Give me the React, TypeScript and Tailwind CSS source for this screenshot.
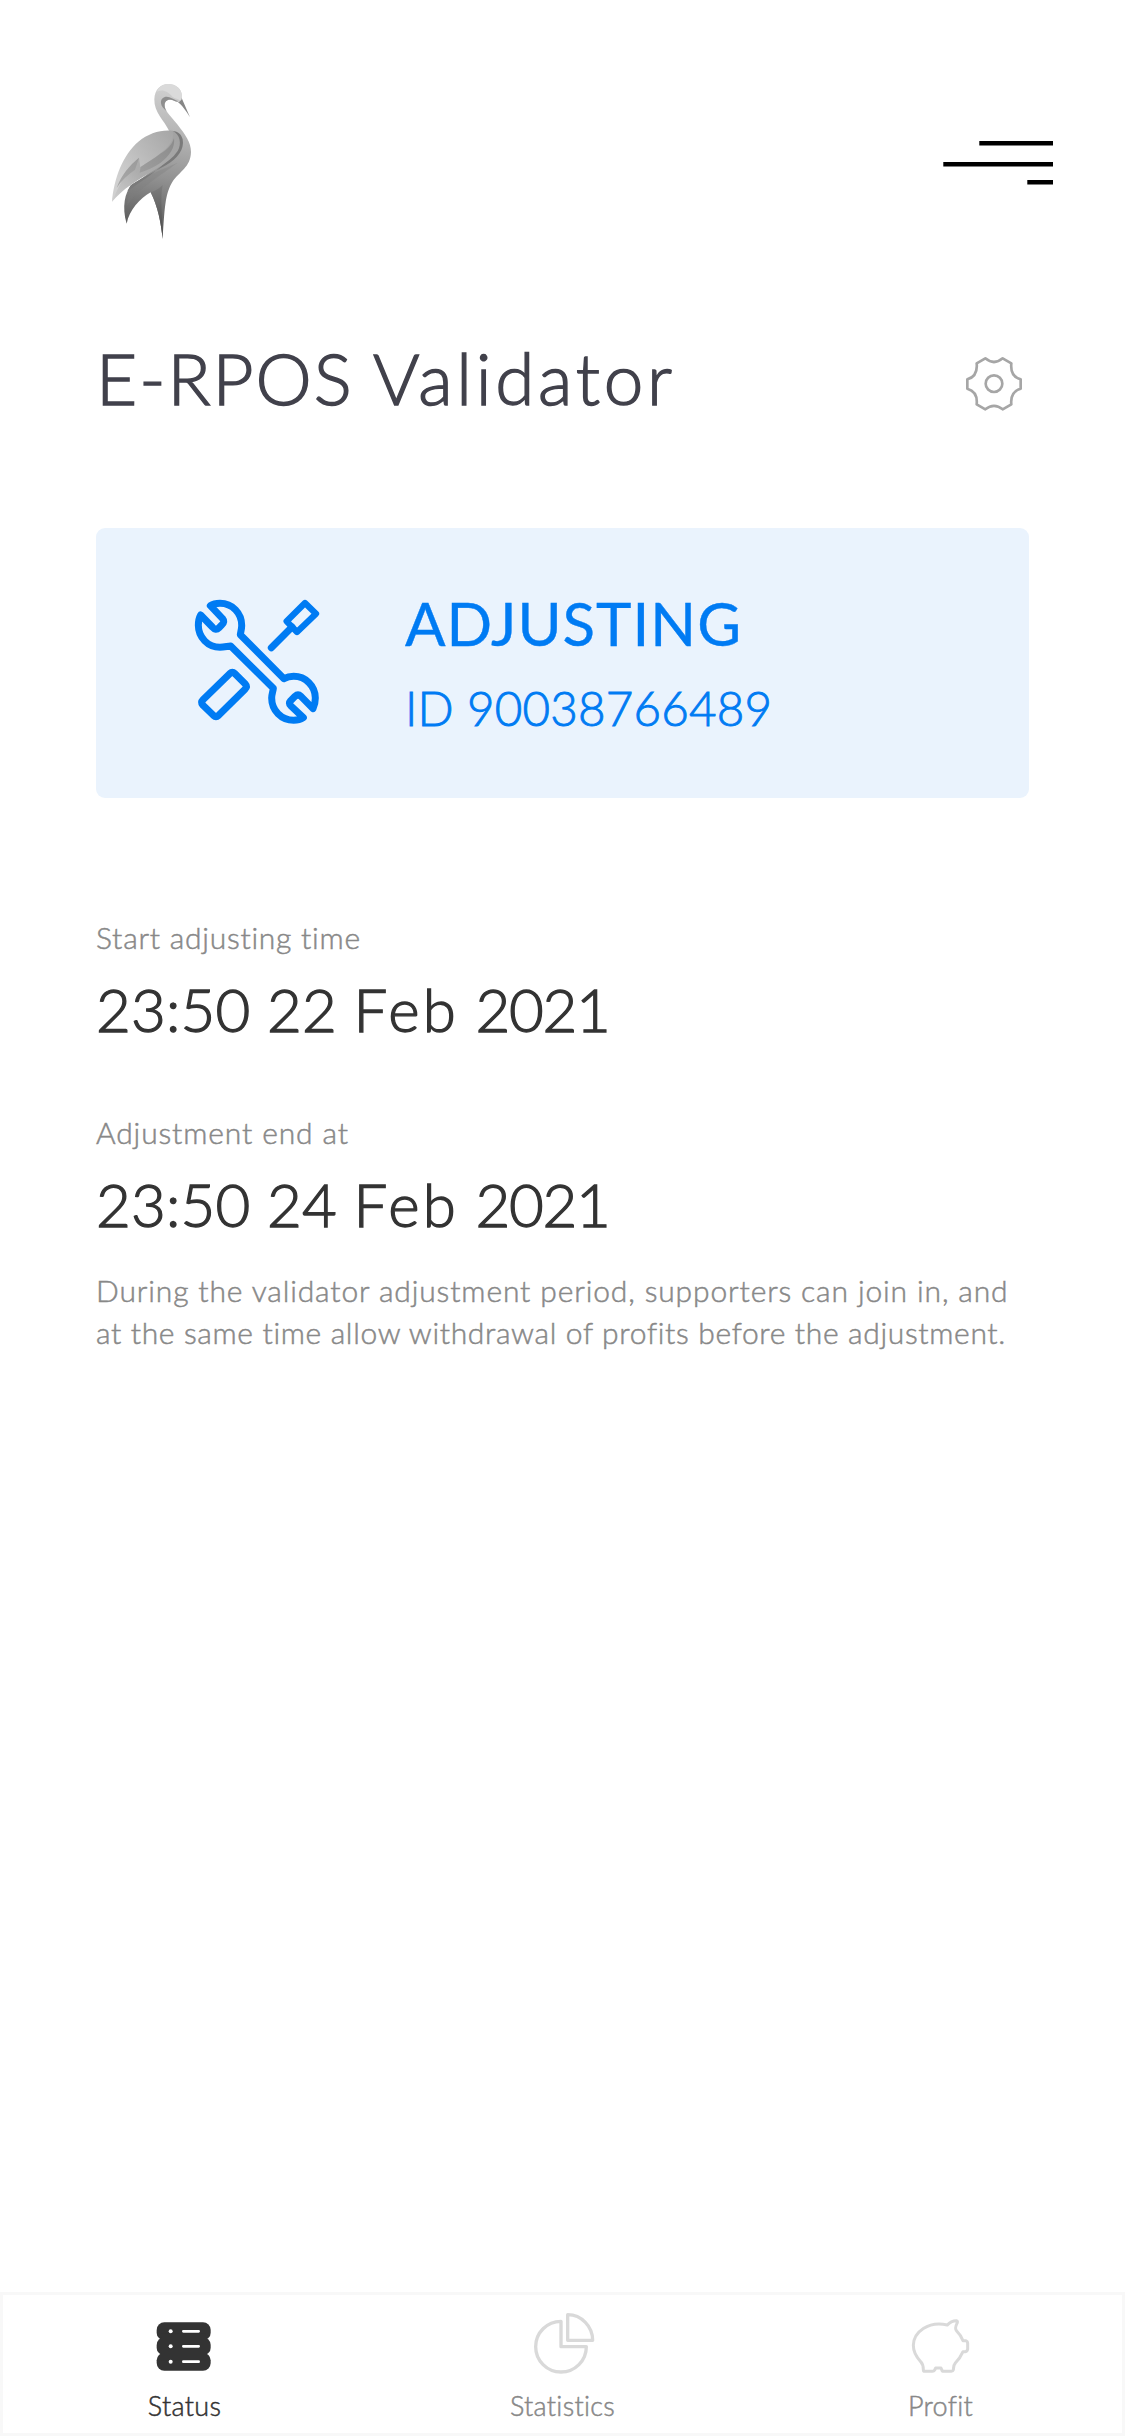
import type { ReactNode } from "react";

function CraneLogo() {
  return (
    <svg className="h-[180px] w-[130px]" viewBox="0 0 390 540" aria-label="Crane logo">
      <defs>
        <linearGradient id="body" gradientUnits="userSpaceOnUse" x1="240" y1="42" x2="170" y2="470">
          <stop offset="0" stopColor="#d2d2d2" />
          <stop offset="0.35" stopColor="#b4b4b4" />
          <stop offset="0.65" stopColor="#929292" />
          <stop offset="1" stopColor="#5c5c5c" />
        </linearGradient>
        <linearGradient id="wing" gradientUnits="userSpaceOnUse" x1="90" y1="330" x2="260" y2="200">
          <stop offset="0" stopColor="#d0d0d0" />
          <stop offset="0.5" stopColor="#bababa" />
          <stop offset="1" stopColor="#a6a6a6" />
        </linearGradient>
        <linearGradient id="lower" gradientUnits="userSpaceOnUse" x1="270" y1="200" x2="70" y2="390">
          <stop offset="0" stopColor="#a2a2a2" />
          <stop offset="0.6" stopColor="#adadad" />
          <stop offset="1" stopColor="#cdcdcd" />
        </linearGradient>
        <linearGradient id="fold" gradientUnits="userSpaceOnUse" x1="260" y1="200" x2="90" y2="360">
          <stop offset="0" stopColor="#8a8a8a" />
          <stop offset="1" stopColor="#a8a8a8" />
        </linearGradient>
        <linearGradient id="leg" gradientUnits="userSpaceOnUse" x1="205" y1="350" x2="218" y2="500">
          <stop offset="0" stopColor="#7c7c7c" />
          <stop offset="1" stopColor="#484848" />
        </linearGradient>
      </defs>
      <path
        fill="url(#body)"
        d="M238 184C222 150 192 128 193 88C194 58 212 42 235 42C257 42 277 56 276 82L271 94C262 97 256 93 248 90C234 85 223 92 224 107C226 126 247 143 263 164C286 194 303 216 303 246C302 292 268 304 247 336C228 368 224 400 218 507C213 460 204 410 182 367C150 385 118 420 110 461C95 410 105 368 124 345C160 322 215 300 238 184Z"
      />
      <path fill="#dadada" d="M201 65C207 48 221 42 235 42C257 42 277 57 276 80L271 92C266 86 254 86 247 80C237 65 215 56 201 65Z" />
      <path fill="#8e8e8e" d="M213 100C211 84 226 77 238 82C248 85 256 92 266 94C258 97 253 92 246 90C234 86 223 93 224 107C224 113 226 118 230 124C221 116 214 110 213 100Z" />
      <path fill="#868686" d="M264 97C271 94 275 90 275 84L300 142C289 124 277 106 264 97Z" />
      <path fill="#7a7a7a" d="M244 183C261 182 274 191 278 208C284 239 262 266 229 285C194 305 157 322 122 346L112 364C158 330 210 300 240 260Z" />
      <path fill="url(#lower)" d="M66 395C83 320 150 230 248 182C270 193 276 221 263 243C235 285 178 304 122 345C100 360 82 377 66 395Z" />
      <path fill="url(#wing)" d="M66 395C72 325 98 255 145 215C176 189 213 178 248 182C256 204 237 231 213 248C194 265 171 277 151 292L147 263C121 286 96 324 66 395Z" />
      <path fill="url(#fold)" d="M147 263L135 299C113 314 94 332 80 354C94 314 119 286 147 263Z" />
      <path fill="url(#fold)" d="M252 204C246 226 230 239 213 250C193 266 171 278 152 291L149 308C171 300 194 291 212 278C239 257 256 233 252 204Z" />
      <path fill="#7e7e7e" opacity=".35" d="M124 346C118 366 112 386 112 408C137 360 207 320 263 278C225 295 162 319 124 346Z" />
      <path fill="url(#leg)" d="M182 367C197 363 209 354 218 345C210 385 217 430 218 507C213 460 204 410 182 367Z" />
    </svg>
  );
}

function MenuIcon() {
  return (
    <svg className="h-[45px] w-[110px]" viewBox="0 0 110 45" aria-label="Menu">
      <rect x="36.3" y="0" width="73.7" height="4.5" />
      <rect x="0.3" y="21" width="109.7" height="4.5" />
      <rect x="84.3" y="39" width="25.7" height="4.5" />
    </svg>
  );
}

function GearIcon() {
  return (
    <svg className="h-[90px] w-[110px]" viewBox="0 0 330 270" fill="none" stroke="#a6a6a6" strokeWidth="8" strokeLinejoin="round" aria-label="Settings">
      <path d="M136 55Q162 77 188 55L214 70Q210 109 242 118V146Q210 155 214 193L188 208Q162 187 136 208L110 193Q114 155 82 146V118Q114 109 110 70Z" />
      <circle cx="162" cy="131" r="25" />
    </svg>
  );
}

function ToolsIcon() {
  return (
    <svg className="h-[160px] w-[170px]" viewBox="0 0 510 480" fill="none" stroke="#007bf3" strokeWidth="21" strokeLinecap="round" strokeLinejoin="round">
      <path d="M121 77C130 71 140 70 150 70C187 70 216 100 215 138C215 147 212 156 211 164L342 296C351 291 361 289 371 289C407 289 436 318 436 354C436 366 434 376 429 386L393 349Q384 341 375 349L362 362Q355 370 363 378L400 413C391 419 381 421 371 421C334 421 305 391 305 354C305 343 309 334 310 325L182 198C172 199 161 202 150 202C114 202 85 172 85 136C85 124 87 114 92 105L127 141Q137 153 147 143L155 135Q166 126 157 115Z" />
      <path d="M304 203L366 141" />
      <path strokeWidth="19" d="M405 69L438 101L381 156L350 124Z" />
      <path d="M179 281Q187 274 195 281L225 311Q233 320 225 328L146 406Q138 413 130 406L99 376Q91 367 99 359Z" />
    </svg>
  );
}

function ServerIcon() {
  return (
    <svg className="h-[60px] w-[60px]" viewBox="163 104 180 180" fill="#333">
      <rect x="168" y="126" width="162" height="54" rx="23" />
      <rect x="168" y="171" width="162" height="54" rx="23" />
      <rect x="168" y="217" width="162" height="54" rx="23" />
      <path d="M182 160H316V240H182Z" />
      <g fill="#fff">
        <circle cx="210" cy="153" r="6" />
        <circle cx="210" cy="198" r="6" />
        <circle cx="210" cy="244" r="6" />
      </g>
      <path stroke="#fff" strokeWidth="8" strokeLinecap="round" d="M248 153H294M248 198H294M248 244H294" />
    </svg>
  );
}

function PieIcon() {
  return (
    <svg className="h-[66px] w-[66px]" viewBox="149 86 198 198" fill="none" stroke="#d9d9d9" strokeWidth="10" strokeLinejoin="round">
      <path d="M242 123A76 76 0 1 0 318 199H242Z" />
      <path d="M262 103V180H337A76 77 0 0 0 262 103Z" />
    </svg>
  );
}

function PiggyIcon() {
  return (
    <svg className="h-[60px] w-[66px]" viewBox="144 104 198 180" fill="none" stroke="#d9d9d9" strokeWidth="9" strokeLinejoin="round">
      <path d="M262 134Q273 121 289 121Q293 122 292 127C287 137 284 147 290 152C299 161 305 170 309 181H317Q323 183 323 189V206Q322 213 316 214H309C302 230 296 238 286 248C280 255 281 262 280 269Q279 273 274 273H251Q246 273 245 268L243 263H227L224 269Q222 273 217 273H195Q190 273 190 268C190 258 189 251 182 244C167 228 160 214 160 195C161 155 205 121 262 134Z" />
    </svg>
  );
}

type FieldProps = { label: string; time: string; month: string; year: string; labelClass: string };

function Field({ label, time, month, year, labelClass }: FieldProps) {
  return (
    <div>
      <div className={`text-[30px] leading-9 text-[#888] ${labelClass}`}>{label}</div>
      <div className="mt-[18px] mb-px text-[60px] leading-[72px] tracking-[0.2px] text-[#333] [-webkit-text-stroke:1.3px_#333]">
        {time} <span className="tracking-[3.2px]">{month}</span> <span className="tracking-[-1.3px]">{year}</span>
      </div>
    </div>
  );
}

function Tab({ icon, label, active = false }: { icon: ReactNode; label: string; active?: boolean }) {
  return (
    <div className="flex w-[378px] flex-none flex-col items-center pt-[11px]">
      <div className="flex h-[69px] items-end justify-center">{icon}</div>
      <div
        className={`mt-[15px] text-[27px] leading-8 tracking-[0.3px] ${active ? "text-[#333] [-webkit-text-stroke:0.5px_#333]" : "text-[#888] [-webkit-text-stroke:0.5px_#888]"}`}
      >
        {label}
      </div>
    </div>
  );
}

export default function App() {
  return (
    <div className="flex h-[2436px] w-[1125px] flex-col overflow-hidden bg-white font-['Lato',sans-serif] font-light whitespace-nowrap">
      <header className="flex h-[250px] items-start justify-between pt-[70px] pr-[72px] pl-[90px]">
        <CraneLogo />
        <div className="pt-[71px]">
          <MenuIcon />
        </div>
      </header>

      <main className="flex-1 pr-[75px] pl-24">
        <div className="flex h-[182px] items-start justify-between pt-[84px]">
          <h1 className="pt-px text-[71px] leading-[86px] tracking-[2px] text-[#41414b] [-webkit-text-stroke:1.4px_#41414b]">
            E-RPOS <span className="ml-[-2px] tracking-[3.7px]">Validator</span>
          </h1>
          <div className="mt-[6px]">
            <GearIcon />
          </div>
        </div>

        <section className="mt-24 flex h-[270px] w-[933px] items-start rounded-[9px] bg-[#eaf3fd] pt-[52px] pl-[74px] text-[#007bf3]">
          <ToolsIcon />
          <div className="pt-[7px] pl-[65px]">
            <div className="text-[60px] leading-[72px] font-normal tracking-[1px] [-webkit-text-stroke:0.4px_#007bf3]">ADJUSTING</div>
            <div className="mt-5 text-[47.5px] leading-[58px] tracking-[0.2px] [-webkit-text-stroke:0.9px_#007bf3]">ID 90038766489</div>
          </div>
        </section>

        <section className="mt-[121px] flex flex-col gap-[68px]">
          <Field label="Start adjusting time" time="23:50 22" month="Feb" year="2021" labelClass="tracking-[0.75px] [-webkit-text-stroke:0.5px_#888]" />
          <Field label="Adjustment end at" time="23:50 24" month="Feb" year="2021" labelClass="tracking-[0.87px] [-webkit-text-stroke:0.5px_#888]" />
        </section>

        <p className="mt-7 text-[30px] leading-[42px] text-[#888] [-webkit-text-stroke:0.5px_#888]">
          <span className="tracking-[0.87px]">During the validator adjustment period, supporters can join in, and</span>
          <br />
          <span className="tracking-[0.66px]">at the same time allow withdrawal of profits before the adjustment.</span>
        </p>
      </main>

      <nav className="flex h-36 justify-center border-[3px] border-[#f8f8f8]">
        <Tab active icon={<ServerIcon />} label="Status" />
        <Tab icon={<PieIcon />} label="Statistics" />
        <Tab icon={<PiggyIcon />} label="Profit" />
      </nav>
    </div>
  );
}
